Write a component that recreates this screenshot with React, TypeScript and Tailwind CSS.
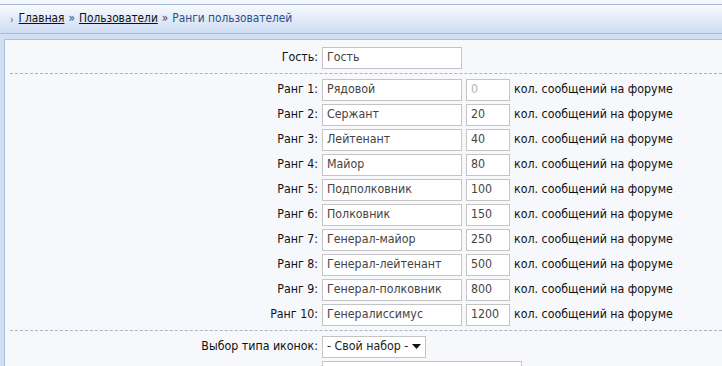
const ranks = [
  { name: "Рядовой", posts: "0" },
  { name: "Сержант", posts: "20" },
  { name: "Лейтенант", posts: "40" },
  { name: "Майор", posts: "80" },
  { name: "Подполковник", posts: "100" },
  { name: "Полковник", posts: "150" },
  { name: "Генерал-майор", posts: "250" },
  { name: "Генерал-лейтенант", posts: "500" },
  { name: "Генерал-полковник", posts: "800" },
  { name: "Генералиссимус", posts: "1200" },
];

function Field({ value, width, muted }: { value: string; width: string; muted?: boolean }) {
  return (
    <div
      className={`flex h-[22px] items-center border border-[#c4c4c4] bg-white px-[4px] ${width} ${
        muted ? "text-[#b4b4b4]" : "text-[#444]"
      }`}
    >
      {value}
    </div>
  );
}

function Row({ label, children }: { label: string; children: React.ReactNode }) {
  return (
    <div className="flex h-[25px] items-center">
      <div className="w-[317px] pr-[4px] text-right text-[#111]">{label}</div>
      <div className="flex items-center gap-[4px]">{children}</div>
    </div>
  );
}

export default function App() {
  return (
    <div className="h-[366px] w-[722px] overflow-hidden bg-[#f3f6fb] pt-[4px] font-['DejaVu_Sans_Condensed','DejaVu_Sans',sans-serif] text-[12.3px]">
      <div className="flex h-[30px] items-center border-y border-[#a7b9d9] bg-gradient-to-b from-[#f8fafd] to-[#cddcf3] pl-[10px] text-[11.8px]">
        <span className="mr-[5px] text-[10px] text-[#355a94]">›</span>
        <a className="text-[#111] underline">Главная</a>
        <span className="mx-[4px] text-[#2c4f86]">»</span>
        <a className="text-[#111] underline">Пользователи</a>
        <span className="mx-[4px] text-[#2c4f86]">»</span>
        <span className="text-[#2c4f86]">Ранги пользователей</span>
      </div>
      <div className="flex h-[338px] bg-[#d3e0f4] pt-[5px]">
        <div className="w-[4px]" />
        <div className="flex-1 border-l border-t border-[#a9bde0] bg-[#f6f8fc] pt-[5px]">
          <Row label="Гость:">
            <Field value="Гость" width="w-[140px]" />
          </Row>
          <div className="my-[3px] ml-[5px] border-t border-dashed border-[#aab4c4]" />
          {ranks.map((r, i) => (
            <Row key={r.name} label={`Ранг ${i + 1}:`}>
              <Field value={r.name} width="w-[140px]" />
              <Field value={r.posts} width="w-[44px]" muted={i === 0} />
              <span className="text-[#111]">кол. сообщений на форуме</span>
            </Row>
          ))}
          <div className="my-[3px] ml-[5px] border-t border-dashed border-[#aab4c4]" />
          <Row label="Выбор типа иконок:">
            <div className="flex h-[22px] w-[104px] items-center justify-between whitespace-nowrap border border-[#c4c4c4] bg-white px-[4px] text-[#222]">
              <span>- Свой набор -</span>
              <svg width="9" height="5" viewBox="0 0 9 5">
                <path d="M0 0h9L4.5 5z" fill="#111" />
              </svg>
            </div>
          </Row>
          <Row label="">
            <Field value="" width="w-[200px]" />
          </Row>
        </div>
      </div>
    </div>
  );
}
